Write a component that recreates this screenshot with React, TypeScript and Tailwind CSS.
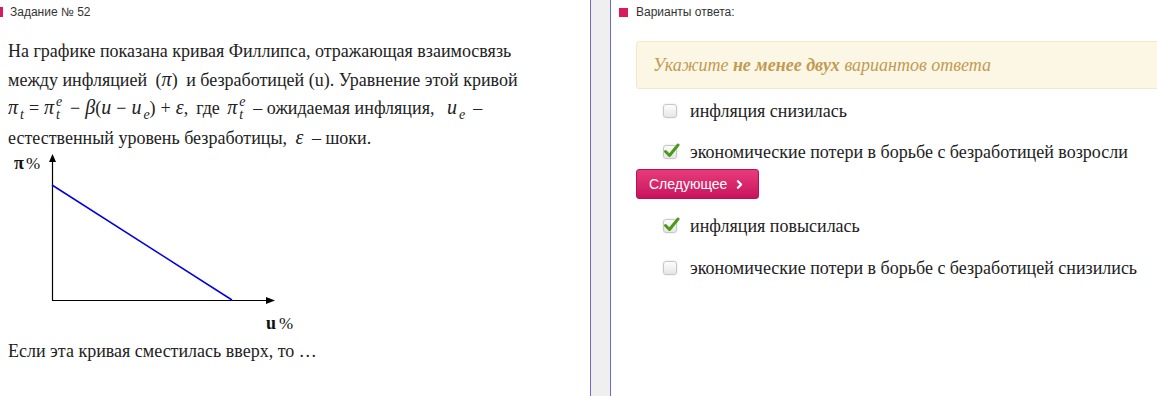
import { ChevronRight } from "lucide-react";

const serif = { fontFamily: '"Liberation Serif", "Times New Roman", serif' };
const sans = { fontFamily: '"Liberation Sans", Arial, sans-serif' };

function Check({ checked }: { checked: boolean }) {
  return (
    <span className="relative inline-block shrink-0 w-[14px] h-[14px] rounded-[3px] border border-[#c8c8c8] bg-gradient-to-b from-[#fdfdfd] to-[#e6e6e6] shadow-[0_0_2px_rgba(0,0,0,0.15)]">
      {checked && (
        <svg className="absolute -left-[1px] -top-[4px]" width="17" height="17" viewBox="0 0 17 17">
          <path d="M2.5 9.5 L6.5 13.5 L15 3" fill="none" stroke="#4c9a1a" strokeWidth="3" strokeLinecap="round" strokeLinejoin="round" />
        </svg>
      )}
    </span>
  );
}

function Option({ label, checked }: { label: string; checked: boolean }) {
  return (
    <div className="flex items-center h-[28px] pl-[52px]">
      <Check checked={checked} />
      <span className="ml-[13px] text-[18px] text-[#222] whitespace-nowrap" style={serif}>{label}</span>
    </div>
  );
}

function M({ children }: { children: React.ReactNode }) {
  return <i className="text-[20px] leading-none" style={serif}>{children}</i>;
}

function Op({ children }: { children: React.ReactNode }) {
  return <span className="mx-[5px] text-[18px]">{children}</span>;
}

function Sub({ children }: { children: React.ReactNode }) {
  return <span className="relative top-[5px] text-[14px] leading-none ml-[2px] italic">{children}</span>;
}

function PiTE() {
  return (
    <M>
      π
      <span className="relative inline-block w-[9px] h-[10px] ml-[2px] text-[14px] leading-none">
        <span className="absolute left-0 -top-[9px]">e</span>
        <span className="absolute left-0 top-[4px]">t</span>
      </span>
    </M>
  );
}

export default function App() {
  return (
    <div className="flex w-[1157px] h-[396px] bg-white overflow-hidden">
      {/* Question */}
      <div className="w-[590px] shrink-0">
        <div className="flex items-center h-[24px]">
          <span className="w-[3px] h-[10px] bg-[#d81b60]" />
          <span className="ml-[7px] text-[12px] text-[#333]" style={sans}>Задание № 52</span>
        </div>
        <div className="pl-[8px] pt-[13px] text-[18px] leading-[28.5px] text-[#222] whitespace-nowrap" style={serif}>
          <p className="h-[28.5px]">На графике показана кривая Филлипса, отражающая взаимосвязь</p>
          <p className="h-[28.5px]">
            между инфляцией <span className="mx-[4px]">(<M>π</M>)</span> и безработицей (u). Уравнение этой кривой
          </p>
          <p className="h-[29.5px]">
            <M>π<Sub>t</Sub></M>
            <Op>=</Op>
            <PiTE />
            <Op>−</Op>
            <M>β</M>(<M>u</M>
            <Op>−</Op>
            <M>u<Sub>e</Sub></M>)
            <Op>+</Op>
            <M>ε</M>,<span className="ml-[8px]">где</span> <span className="ml-[3px]"><PiTE /></span>
            <span className="ml-[5px]">– ожидаемая инфляция,</span> <span className="ml-[8px]"><M>u<Sub>e</Sub></M></span>
            <span className="ml-[8px]">–</span>
          </p>
          <p className="h-[28.5px]">
            естественный уровень безработицы, <span className="mx-[4px]"><M>ε</M></span> – шоки.
          </p>
        </div>
        <svg className="-mt-[2px] block" width="300" height="185" viewBox="0 0 300 185">
          <text x="14" y="19" fontFamily="Liberation Serif, serif" fontSize="18" fontWeight="bold" fill="#111">π</text>
          <text x="26" y="19" fontFamily="Liberation Serif, serif" fontSize="17" fill="#111">%</text>
          <line x1="52.5" y1="10" x2="52.5" y2="150.5" stroke="#000" strokeWidth="1.2" />
          <polygon points="52.5,4 49,12 56,12" fill="#000" />
          <line x1="52" y1="150.5" x2="268" y2="150.5" stroke="#000" strokeWidth="1.2" />
          <polygon points="275,150.5 266,147 266,154" fill="#000" />
          <line x1="52" y1="35" x2="232" y2="150" stroke="#0000e0" strokeWidth="1.5" />
          <text x="266" y="179" fontFamily="Liberation Serif, serif" fontSize="18" fontWeight="bold" fill="#111">u</text>
          <text x="279" y="179" fontFamily="Liberation Serif, serif" fontSize="17" fill="#111">%</text>
        </svg>
        <p className="pl-[8px] pt-[3px] text-[18px] text-[#222]" style={serif}>Если эта кривая сместилась вверх, то …</p>
      </div>

      {/* Divider */}
      <div className="w-[21px] shrink-0 border-x border-[#6a6ad6] bg-[#efefef]" />

      {/* Answers */}
      <div className="flex-1 min-w-0">
        <div className="flex items-center h-[24px] pl-[8px]">
          <span className="w-[9px] h-[9px] bg-[#d81b60]" />
          <span className="ml-[8px] text-[12px] text-[#333]" style={sans}>Варианты ответа:</span>
        </div>
        <div className="ml-[25px] mt-[17px] -mr-[10px] h-[48px] flex items-center pl-[16px] bg-[#fcf7e4] border border-[#f5e8c9] rounded-[3px]">
          <span className="text-[18px] italic text-[#c29a52]" style={serif}>
            Укажите <b>не менее двух</b> вариантов ответа
          </span>
        </div>
        <div className="mt-[8px]">
          <Option label="инфляция снизилась" checked={false} />
          <div className="h-[13px]" />
          <Option label="экономические потери в борьбе с безработицей возросли" checked={true} />
          <button className="ml-[25px] mt-[3px] h-[30px] px-[12px] flex items-center gap-[6px] rounded-[3px] bg-gradient-to-b from-[#e83a7b] to-[#c8115d] border border-[#b80f55] text-white text-[14px]" style={sans}>
            Следующее
            <ChevronRight className="w-[13px] h-[13px]" strokeWidth={4} />
          </button>
          <div className="h-[13px]" />
          <Option label="инфляция повысилась" checked={true} />
          <div className="h-[14px]" />
          <Option label="экономические потери в борьбе с безработицей снизились" checked={false} />
        </div>
      </div>
    </div>
  );
}
